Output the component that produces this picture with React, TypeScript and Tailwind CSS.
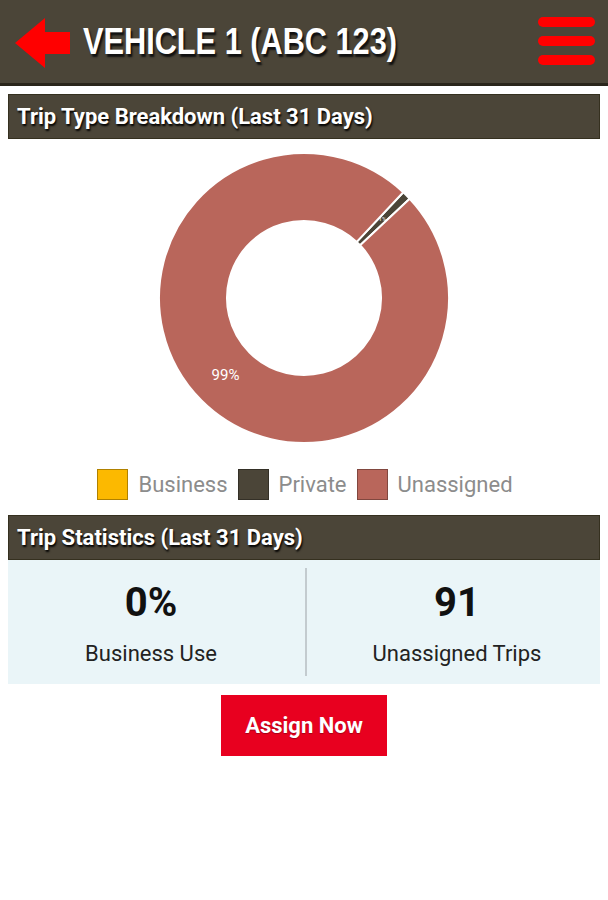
import React from "react";

const BROWN = "#4b4538";

interface Slice {
  label: string;
  value: number;
  color: string;
}

const slices: Slice[] = [
  { label: "Business", value: 0, color: "#fcb900" },
  { label: "Private", value: 1, color: "#4b4538" },
  { label: "Unassigned", value: 99, color: "#b9665b" },
];

function point(cx: number, cy: number, r: number, deg: number) {
  const a = (deg * Math.PI) / 180;
  return [cx + r * Math.sin(a), cy - r * Math.cos(a)];
}

function arcPath(start: number, end: number, ro: number, ri: number) {
  const cx = 150;
  const cy = 150;
  const large = end - start > 180 ? 1 : 0;
  const [x1, y1] = point(cx, cy, ro, start);
  const [x2, y2] = point(cx, cy, ro, end);
  const [x3, y3] = point(cx, cy, ri, end);
  const [x4, y4] = point(cx, cy, ri, start);
  return `M${x1} ${y1} A${ro} ${ro} 0 ${large} 1 ${x2} ${y2} L${x3} ${y3} A${ri} ${ri} 0 ${large} 0 ${x4} ${y4} Z`;
}

function Donut() {
  // chart is rotated so the private slice sits at ~45deg
  const start = 43.2;
  let angle = start;
  const total = slices.reduce((s, x) => s + x.value, 0);

  return (
    <svg width="300" height="300" viewBox="0 0 300 300">
      {slices
        .filter((s) => s.value > 0)
        .map((s) => {
          const sweep = (s.value / total) * 360;
          const from = angle;
          angle += sweep;
          const mid = from + sweep / 2;
          const [lx, ly] = point(150, 150, 111, mid);
          return (
            <g key={s.label}>
              <path
                d={arcPath(from, from + sweep, 145, 77)}
                fill={s.color}
                stroke="#ffffff"
                strokeWidth="2"
              />
              <text
                x={lx}
                y={ly}
                fill="#ffffff"
                fontSize={s.value > 5 ? 15 : 6}
                textAnchor="middle"
                dominantBaseline="middle"
                fontFamily="Roboto, sans-serif"
              >
                {s.value}%
              </text>
            </g>
          );
        })}
    </svg>
  );
}

function SectionHeader({ title }: { title: string }) {
  return (
    <div className="h-[45px] flex items-center px-[8px] bg-[#4b4538] border border-[#35301f]">
      <span className="text-white text-[22px] font-bold font-['Roboto',sans-serif] [text-shadow:1px_2px_2px_#000]">
        {title}
      </span>
    </div>
  );
}

export default function App() {
  return (
    <div className="w-[608px] h-[900px] bg-white font-['Roboto',sans-serif]">
      {/* HEADER */}
      <div
        className="h-[86px] flex items-center justify-between pl-[15px] pr-[13px] border-b-[3px] border-[#2a251b]"
        style={{ backgroundColor: BROWN }}
      >
        <div className="flex items-center gap-[13px]">
          <svg width="55" height="50" viewBox="0 0 55 50" className="mt-[2px] shrink-0">
            <polygon
              points="0,25 30,0 30,14 55,14 55,36 30,36 30,50"
              fill="#ff0000"
            />
          </svg>
          <span className="block whitespace-nowrap origin-left scale-x-[0.83] text-white text-[37px] font-bold font-['Liberation_Sans',sans-serif] [text-shadow:2px_3px_2px_#111]">
            VEHICLE 1 (ABC 123)
          </span>
        </div>
        <div className="flex flex-col gap-[9px] mb-[2px]">
          <div className="w-[57px] h-[10px] rounded-full bg-[#ff0000]" />
          <div className="w-[57px] h-[10px] rounded-full bg-[#ff0000]" />
          <div className="w-[57px] h-[10px] rounded-full bg-[#ff0000]" />
        </div>
      </div>

      <div className="px-[8px] pt-[8px]">
        <SectionHeader title="Trip Type Breakdown (Last 31 Days)" />

        {/* CHART */}
        <div className="flex justify-center pt-[9px]">
          <Donut />
        </div>

        {/* LEGEND */}
        <div className="flex justify-center items-center gap-[10px] mt-[20px] pl-[2px]">
          {slices.map((s) => (
            <div key={s.label} className="flex items-center gap-[10px]">
              <div
                className="w-[31px] h-[31px] border border-black/30"
                style={{ backgroundColor: s.color }}
              />
              <span className="text-[22px] text-[#8c8c8c]">{s.label}</span>
            </div>
          ))}
        </div>

        <div className="mt-[14px]">
          <SectionHeader title="Trip Statistics (Last 31 Days)" />
        </div>

        {/* STATS */}
        <div className="bg-[#eaf5f8] h-[124px] flex items-center py-[8px]">
          <div className="flex-1 flex flex-col items-center pr-[11px]">
            <span className="text-[40px] font-bold text-[#111] leading-none mt-[8px]">
              0%
            </span>
            <span className="text-[22px] text-[#222] mt-[14px]">Business Use</span>
          </div>
          <div className="w-[2px] self-stretch bg-[#c3cbcf]" />
          <div className="flex-1 flex flex-col items-center pl-[7px]">
            <span className="text-[40px] font-bold text-[#111] leading-none mt-[8px]">
              91
            </span>
            <span className="text-[22px] text-[#222] mt-[14px]">
              Unassigned Trips
            </span>
          </div>
        </div>

        {/* BUTTON */}
        <div className="flex justify-center mt-[11px]">
          <button className="w-[166px] h-[61px] bg-[#e8001f] text-white text-[22px] font-bold [text-shadow:0_1px_1px_rgba(0,0,0,0.3)]">
            Assign Now
          </button>
        </div>
      </div>
    </div>
  );
}
